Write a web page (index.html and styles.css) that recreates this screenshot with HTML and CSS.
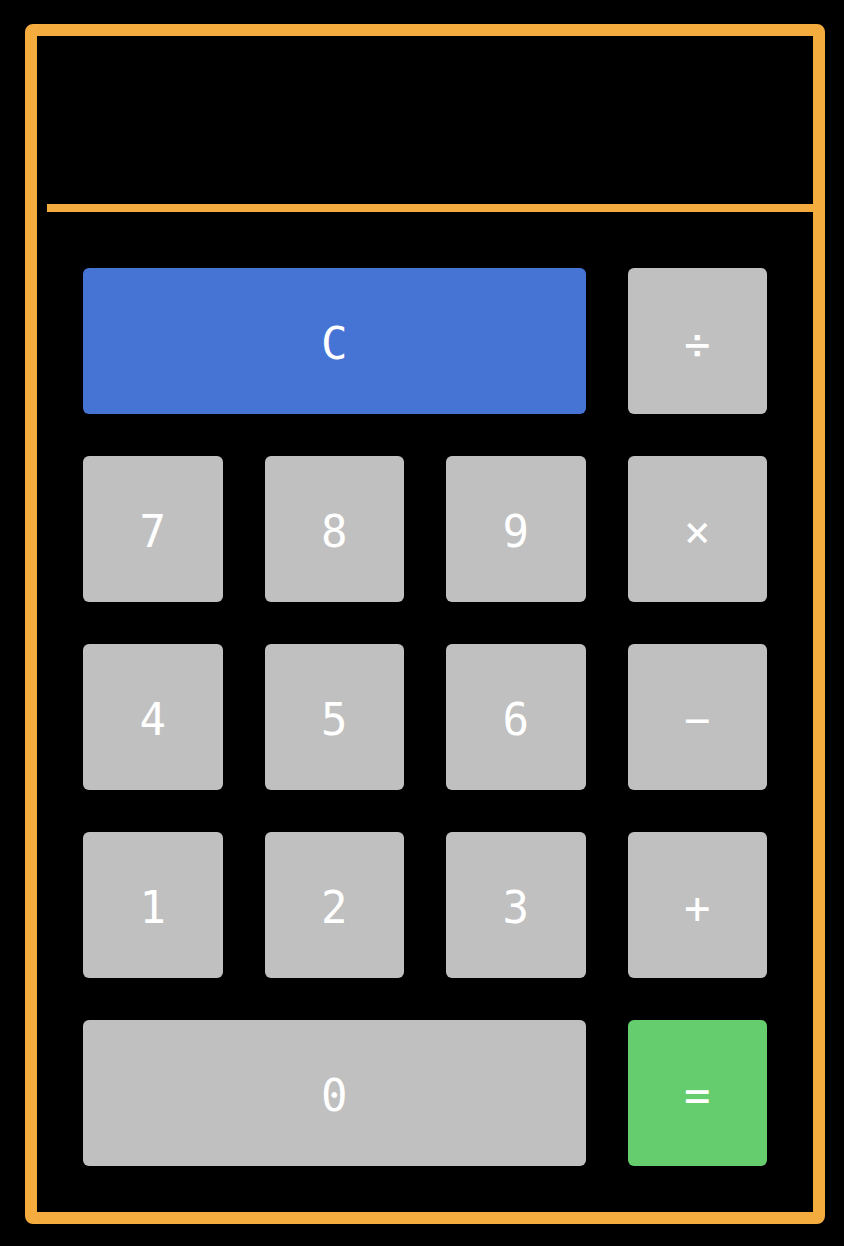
FILE: index.html
```html
<!DOCTYPE html>
<html>
<head>
<meta charset="utf-8">
<link rel="stylesheet" href="styles.css">
</head>
<body>
<div class="calc">
  <div class="display"></div>
  <div class="keys">
    <button class="key wide clear">C</button>
    <button class="key">÷</button>
    <button class="key">7</button>
    <button class="key">8</button>
    <button class="key">9</button>
    <button class="key">×</button>
    <button class="key">4</button>
    <button class="key">5</button>
    <button class="key">6</button>
    <button class="key">−</button>
    <button class="key">1</button>
    <button class="key">2</button>
    <button class="key">3</button>
    <button class="key">+</button>
    <button class="key wide">0</button>
    <button class="key equals">=</button>
  </div>
</div>
</body>
</html>
```
FILE: styles.css
```css
html, body {
  margin: 0;
  padding: 0;
  background: #000;
}
body {
  padding: 24px 19px 22px 25px;
}
.calc {
  width: 776px;
  border: 12px solid #f4ac3f;
  border-radius: 8px;
  background: #000;
}
.display {
  height: 168px;
  margin-left: 10px;
  border-bottom: 8px solid #f4ac3f;
}
.keys {
  display: grid;
  grid-template-columns: repeat(4, 139.5px);
  grid-auto-rows: 146px;
  gap: 42px;
  padding: 56px 46px 46px 46px;
}
.key {
  border: none;
  border-radius: 6px;
  background: #c0c0c0;
  color: #fff;
  font-family: "DejaVu Sans Mono", monospace;
  font-size: 44px;
  padding: 4px 0 0 0;
  margin: 0;
}
.wide {
  grid-column: span 3;
}
.clear {
  background: #4674d5;
}
.equals {
  background: #66cd6e;
}
```
